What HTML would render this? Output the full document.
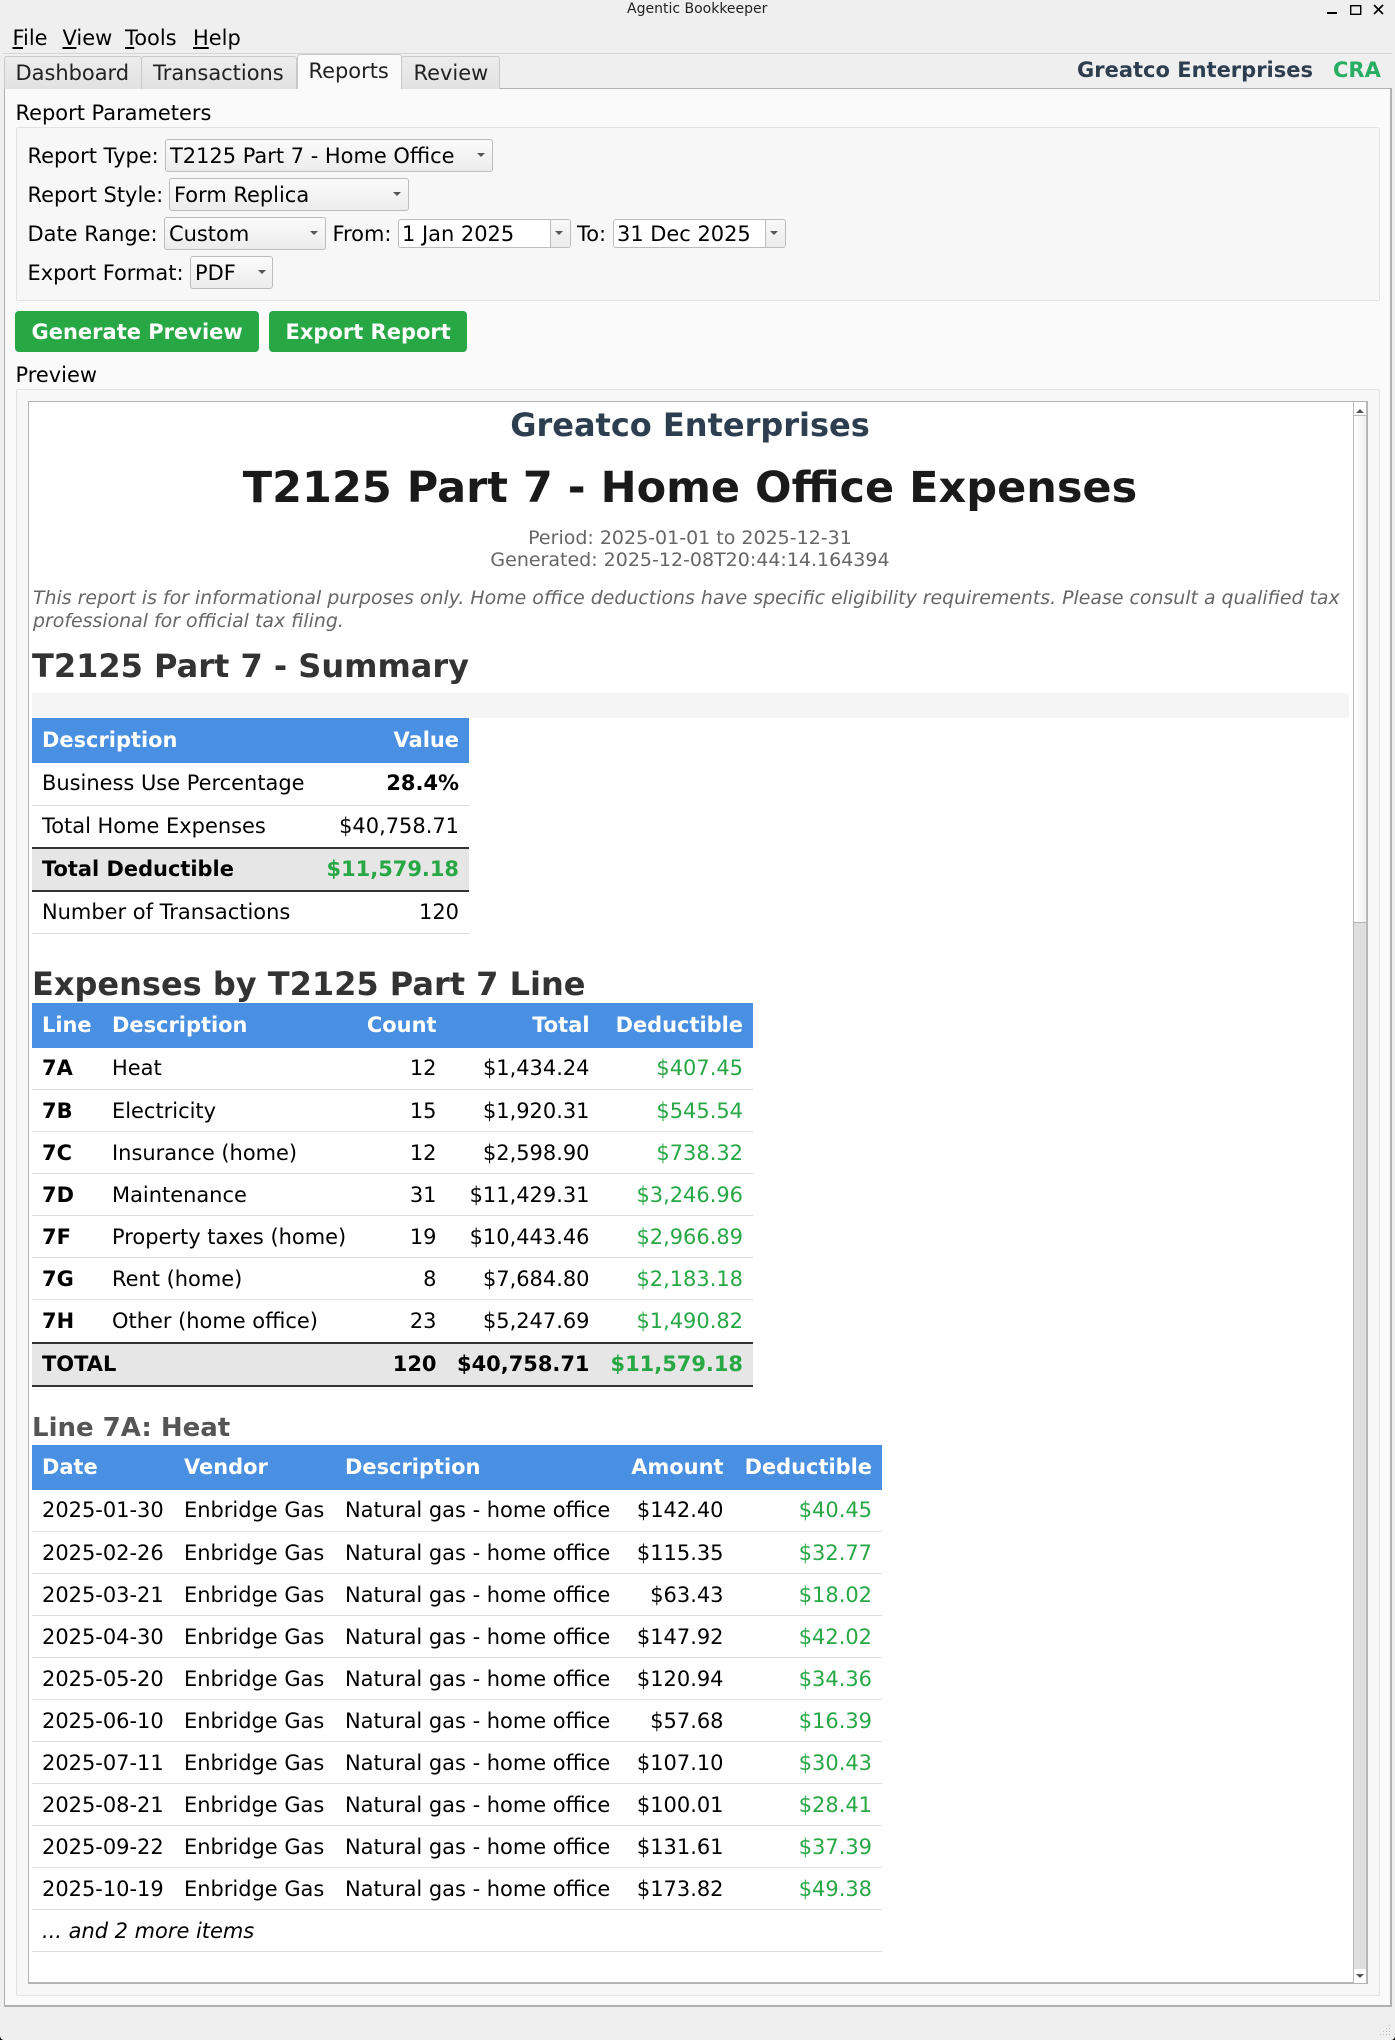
<!DOCTYPE html>
<html><head><meta charset="utf-8"><title>Agentic Bookkeeper</title>
<style>
*{box-sizing:border-box}
html,body{margin:0;padding:0;background:#000}
body{width:1395px;height:2040px;overflow:hidden;font-family:"DejaVu Sans","Liberation Sans",sans-serif;color:#000}
#w{position:absolute;left:0;top:0;width:1395px;height:2040px;background:#efefef;overflow:hidden;border-radius:0 0 4px 4px}
.a{position:absolute}
.t{position:absolute;white-space:nowrap;line-height:26px;font-size:20.95px}
.b{font-weight:bold}
.c{left:0;text-align:center;width:1380px}
.tab{position:absolute;top:56px;height:33px;background:linear-gradient(#ececec,#e2e2e2);border:1px solid #c9c9c9;border-bottom:none;border-radius:3px 3px 0 0}
.cb{position:absolute;height:33px;background:linear-gradient(#fbfbfb,#ececec);border:1px solid #bcbcbc;border-radius:3px}
.de{position:absolute;height:29px;background:#fff;border:1px solid #bcbcbc;border-radius:3px}
.arr{position:absolute;width:0;height:0;border-left:4px solid transparent;border-right:4px solid transparent;border-top:4px solid #555}
.btn{position:absolute;top:311px;height:41px;background:#28a745;border-radius:4px}
table{position:absolute;border-collapse:separate;border-spacing:0;table-layout:fixed;font-size:20.95px;left:32px}
th{background:#4a90e2;color:#fff;font-weight:bold;height:45px;padding:0 10px 2px;text-align:left;white-space:nowrap}
td{height:42px;padding:0 10px 2px;border-bottom:1px solid #ddd;white-space:nowrap;background:#fff}
table.s td{padding-bottom:0}
table.s tr.f td{padding-bottom:2px}
.r{text-align:right}
.g{color:#28a745}
tr.n td{border-bottom:none}
tr.tot td{background:#e6e6e6;font-weight:bold;border-top:2px solid #333;border-bottom:2px solid #333;height:45px}
table.s tr.tot td{padding-bottom:2px}
</style></head><body><div id="w">

<div class="t" style="left:627px;top:-4px;font-size:14px;color:#222">Agentic Bookkeeper</div>
<svg class="a" style="left:1320px;top:0" width="70" height="20"><rect x="7" y="12" width="10" height="2" fill="#000"/><rect x="30.7" y="5.7" width="10" height="8.6" fill="none" stroke="#000" stroke-width="1.4"/><path d="M54 5L63 14M63 5L54 14" stroke="#000" stroke-width="1.7"/></svg>

<div class="t" style="left:12.5px;top:25px"><u>F</u>ile</div>
<div class="t" style="left:62.5px;top:25px"><u>V</u>iew</div>
<div class="t" style="left:125px;top:25px"><u>T</u>ools</div>
<div class="t" style="left:193px;top:25px"><u>H</u>elp</div>
<div class="a" style="left:3px;top:53px;width:1389px;height:1px;background:#d5d5d5"></div>

<div class="a" style="left:4px;top:88px;width:1388px;height:1919px;background:#fafafa;border:1px solid #b0b0b0;border-width:1px 2px 2px 1px"></div>
<div class="tab" style="left:4px;width:138px"></div>
<div class="tab" style="left:141px;width:156px"></div>
<div class="tab" style="left:297px;top:54px;width:105px;height:35px;background:#fafafa"></div>
<div class="tab" style="left:401px;width:99px"></div>
<div class="t" style="left:15.5px;top:60px;color:#222">Dashboard</div>
<div class="t" style="left:153px;top:60px;color:#222">Transactions</div>
<div class="t" style="left:308.5px;top:58px;color:#222">Reports</div>
<div class="t" style="left:413.5px;top:60px;color:#222">Review</div>
<div class="t b" style="left:1077px;top:57px;color:#2c3e50;font-size:21px">Greatco Enterprises</div>
<div class="t b" style="left:1333px;top:57px;color:#27ae60;font-size:21px">CRA</div>

<div class="t" style="left:15.5px;top:100px">Report Parameters</div>
<div class="a" style="left:16px;top:127px;width:1364px;height:174px;background:#f7f7f7;border:1px solid #e2e2e2;border-radius:2px"></div>

<div class="t" style="left:27.5px;top:143px">Report Type:</div>
<div class="cb" style="left:165px;top:139px;width:328px"></div>
<div class="t" style="left:170px;top:143px">T2125 Part 7 - Home Office</div>
<div class="arr" style="left:477px;top:153px"></div>

<div class="t" style="left:27.5px;top:182px">Report Style:</div>
<div class="cb" style="left:169px;top:178px;width:240px"></div>
<div class="t" style="left:174px;top:182px">Form Replica</div>
<div class="arr" style="left:393px;top:192px"></div>

<div class="t" style="left:27.5px;top:221px">Date Range:</div>
<div class="cb" style="left:164px;top:217px;width:162px"></div>
<div class="t" style="left:169px;top:221px">Custom</div>
<div class="arr" style="left:310px;top:231px"></div>
<div class="t" style="left:332.5px;top:221px">From:</div>
<div class="de" style="left:398px;top:219px;width:173px"></div>
<div class="a" style="left:550px;top:220px;width:20px;height:27px;background:linear-gradient(#f8f8f8,#ebebeb);border-left:1px solid #bcbcbc;border-radius:0 3px 3px 0"></div>
<div class="arr" style="left:555px;top:231px"></div>
<div class="t" style="left:402px;top:221px">1 Jan 2025</div>
<div class="t" style="left:577px;top:221px">To:</div>
<div class="de" style="left:613px;top:219px;width:173px"></div>
<div class="a" style="left:765px;top:220px;width:20px;height:27px;background:linear-gradient(#f8f8f8,#ebebeb);border-left:1px solid #bcbcbc;border-radius:0 3px 3px 0"></div>
<div class="arr" style="left:770px;top:231px"></div>
<div class="t" style="left:617px;top:221px">31 Dec 2025</div>

<div class="t" style="left:27.5px;top:260px">Export Format:</div>
<div class="cb" style="left:190px;top:256px;width:83px"></div>
<div class="t" style="left:195px;top:260px">PDF</div>
<div class="arr" style="left:258px;top:270px"></div>

<div class="btn" style="left:15px;width:244px"></div>
<div class="t b" style="left:31.5px;top:319px;color:#fff;font-size:21px">Generate Preview</div>
<div class="btn" style="left:269px;width:198px"></div>
<div class="t b" style="left:285.5px;top:319px;color:#fff;font-size:21px">Export Report</div>

<div class="t" style="left:15.5px;top:362px">Preview</div>
<div class="a" style="left:16px;top:389px;width:1364px;background:#f7f7f7;border:1px solid #e2e2e2;border-radius:2px;height:1607px"></div>

<div class="a" style="left:28px;top:401px;width:1340px;height:1583px;background:#fff;border:1px solid #b4b4b4;border-width:1px 1px 2px 1px"></div>
<div class="a" style="left:1353px;top:402px;width:14px;height:1581px;background:#dedede;border-left:1px solid #bbb;border-right:1px solid #bbb"></div>
<div class="a" style="left:1354px;top:402px;width:12px;height:14px;background:#fff;border-bottom:1px solid #bbb"></div>
<div class="a" style="left:1354px;top:416px;width:12px;height:507px;background:linear-gradient(90deg,#fff,#f0f0f0);border-bottom:1px solid #b4b4b4"></div>
<div class="a" style="left:1354px;top:1969px;width:12px;height:14px;background:#fff"></div>
<div class="arr" style="left:1356px;top:409px;border-top:none;border-bottom:4px solid #555"></div>
<div class="arr" style="left:1356px;top:1974px"></div>

<div class="t b c" style="top:410px;font-size:32px;color:#2c3e50;line-height:30px">Greatco Enterprises</div>
<div class="t b c" style="top:463px;font-size:43px;color:#1a1a1a;line-height:50px">T2125 Part 7 - Home Office Expenses</div>
<div class="t c" style="top:525px;font-size:19px;color:#666">Period: 2025-01-01 to 2025-12-31</div>
<div class="t c" style="top:547px;font-size:19px;color:#666">Generated: 2025-12-08T20:44:14.164394</div>
<div class="t" style="left:33px;top:585px;font-size:18.92px;color:#666;font-style:italic">This report is for informational purposes only. Home office deductions have specific eligibility requirements. Please consult a qualified tax</div>
<div class="t" style="left:33px;top:608px;font-size:18.92px;color:#666;font-style:italic">professional for official tax filing.</div>
<div class="t b" style="left:32px;top:646px;font-size:32px;color:#333;line-height:40px">T2125 Part 7 - Summary</div>
<div class="a" style="left:32px;top:693px;width:1317px;height:25px;background:#f5f5f5"></div>

<table style="top:718px;width:437px">
<colgroup><col style="width:280px"><col style="width:157px"></colgroup>
<tr><th>Description</th><th class="r">Value</th></tr>
<tr><td style="height:43px">Business Use Percentage</td><td class="r b" style="height:43px">28.4%</td></tr>
<tr class="n"><td style="height:41px">Total Home Expenses</td><td class="r" style="height:41px">$40,758.71</td></tr>
<tr class="tot"><td>Total Deductible</td><td class="r g">$11,579.18</td></tr>
<tr><td>Number of Transactions</td><td class="r">120</td></tr>
</table>

<div class="t b" style="left:32px;top:964px;font-size:32px;color:#333;line-height:40px">Expenses by T2125 Part 7 Line</div>

<table class="s" style="top:1003px;width:721px">
<colgroup><col style="width:70px"><col style="width:224.5px"><col style="width:120px"><col style="width:153px"><col style="width:153.5px"></colgroup>
<tr><th>Line</th><th>Description</th><th class="r">Count</th><th class="r">Total</th><th class="r">Deductible</th></tr>
<tr class="f"><td class="b">7A</td><td>Heat</td><td class="r">12</td><td class="r">$1,434.24</td><td class="r g">$407.45</td></tr>
<tr><td class="b">7B</td><td>Electricity</td><td class="r">15</td><td class="r">$1,920.31</td><td class="r g">$545.54</td></tr>
<tr><td class="b">7C</td><td>Insurance (home)</td><td class="r">12</td><td class="r">$2,598.90</td><td class="r g">$738.32</td></tr>
<tr><td class="b">7D</td><td>Maintenance</td><td class="r">31</td><td class="r">$11,429.31</td><td class="r g">$3,246.96</td></tr>
<tr><td class="b">7F</td><td>Property taxes (home)</td><td class="r">19</td><td class="r">$10,443.46</td><td class="r g">$2,966.89</td></tr>
<tr><td class="b">7G</td><td>Rent (home)</td><td class="r">8</td><td class="r">$7,684.80</td><td class="r g">$2,183.18</td></tr>
<tr class="n"><td class="b">7H</td><td>Other (home office)</td><td class="r">23</td><td class="r">$5,247.69</td><td class="r g">$1,490.82</td></tr>
<tr class="tot"><td>TOTAL</td><td></td><td class="r">120</td><td class="r" style="padding-left:0">$40,758.71</td><td class="r g" style="padding-left:0">$11,579.18</td></tr>
</table>

<div class="t b" style="left:32px;top:1413px;font-size:26px;color:#555;line-height:30px">Line 7A: Heat</div>

<table class="s" style="top:1445px;width:850px">
<colgroup><col style="width:142px"><col style="width:161px"><col style="width:282.5px"><col style="width:116px"><col style="width:148.5px"></colgroup>
<tr><th>Date</th><th>Vendor</th><th>Description</th><th class="r">Amount</th><th class="r">Deductible</th></tr>
<tr class="f"><td>2025-01-30</td><td>Enbridge Gas</td><td>Natural gas - home office</td><td class="r">$142.40</td><td class="r g">$40.45</td></tr>
<tr><td>2025-02-26</td><td>Enbridge Gas</td><td>Natural gas - home office</td><td class="r">$115.35</td><td class="r g">$32.77</td></tr>
<tr><td>2025-03-21</td><td>Enbridge Gas</td><td>Natural gas - home office</td><td class="r">$63.43</td><td class="r g">$18.02</td></tr>
<tr><td>2025-04-30</td><td>Enbridge Gas</td><td>Natural gas - home office</td><td class="r">$147.92</td><td class="r g">$42.02</td></tr>
<tr><td>2025-05-20</td><td>Enbridge Gas</td><td>Natural gas - home office</td><td class="r">$120.94</td><td class="r g">$34.36</td></tr>
<tr><td>2025-06-10</td><td>Enbridge Gas</td><td>Natural gas - home office</td><td class="r">$57.68</td><td class="r g">$16.39</td></tr>
<tr><td>2025-07-11</td><td>Enbridge Gas</td><td>Natural gas - home office</td><td class="r">$107.10</td><td class="r g">$30.43</td></tr>
<tr><td>2025-08-21</td><td>Enbridge Gas</td><td>Natural gas - home office</td><td class="r">$100.01</td><td class="r g">$28.41</td></tr>
<tr><td>2025-09-22</td><td>Enbridge Gas</td><td>Natural gas - home office</td><td class="r">$131.61</td><td class="r g">$37.39</td></tr>
<tr><td>2025-10-19</td><td>Enbridge Gas</td><td>Natural gas - home office</td><td class="r">$173.82</td><td class="r g">$49.38</td></tr>
<tr><td colspan="5" style="font-style:italic">... and 2 more items</td></tr>
</table>

<svg class="a" style="left:1378px;top:2024px" width="17" height="16"><g fill="#bbb"><rect x="11" y="1" width="1" height="1"/><rect x="8" y="4" width="1" height="1"/><rect x="11" y="4" width="1" height="1"/><rect x="5" y="7" width="1" height="1"/><rect x="8" y="7" width="1" height="1"/><rect x="11" y="7" width="1" height="1"/><rect x="2" y="10" width="1" height="1"/><rect x="5" y="10" width="1" height="1"/><rect x="8" y="10" width="1" height="1"/><rect x="11" y="10" width="1" height="1"/></g></svg>
</div></body></html>
